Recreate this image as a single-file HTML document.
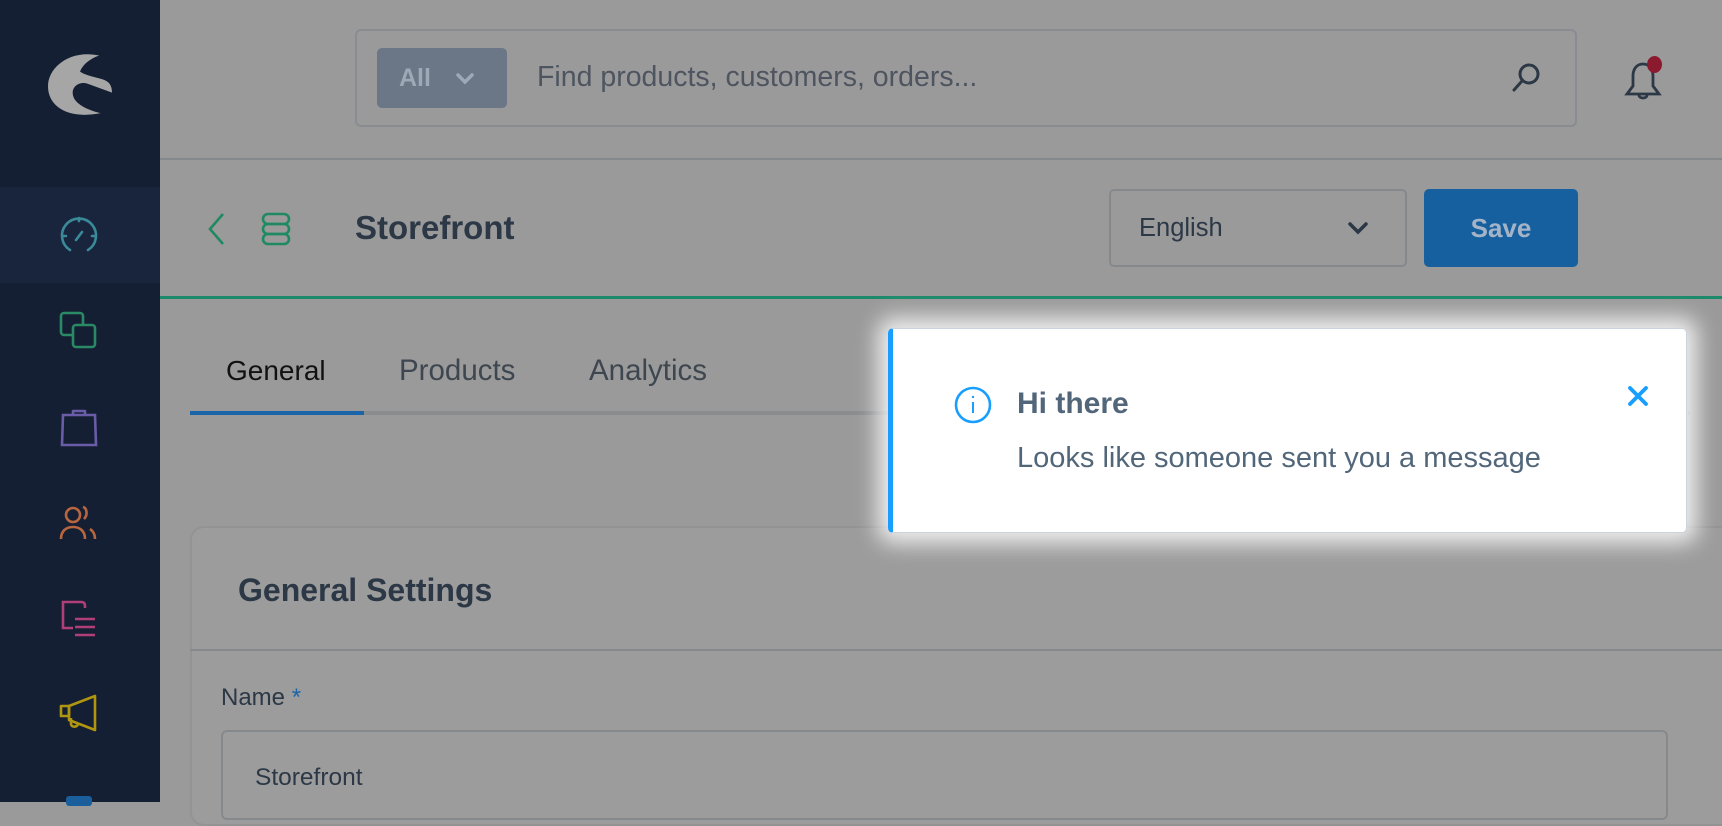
<!DOCTYPE html>
<html style="background:#9a9a9a"><head><meta charset="utf-8"><style>
*{box-sizing:border-box;margin:0;padding:0}
body{width:1722px;height:802px;overflow:hidden;background:#9a9a9a;font-family:"Liberation Sans",sans-serif;position:relative;color:#2c3846}
.a{position:absolute}
.side{left:0;top:0;width:160px;height:802px;background:#151f33}
.ico{position:absolute;left:57px;width:44px;height:44px}
</style></head><body>
<div class="a side">
  <svg class="a" style="left:46px;top:53px" width="68" height="64" viewBox="0 0 100 100"><path d="M80 4 C35 -6 0 22 0 52 C0 84 32 104 82 94 C62 89 42 80 39 66 C36 52 50 44 62 48 L100 62 C100 50 95 44 85 41 C70 37 56 34 50 29 C55 17 66 9 80 4Z" fill="#a6a6a6"/></svg>
  <div class="a" style="left:0;top:187px;width:160px;height:96px;background:#19253c"></div>
  <svg class="ico" style="top:212px" viewBox="0 0 44 44" fill="none" stroke="#3a8a9a" stroke-width="2.6" stroke-linecap="round"><path d="M13 38 A17 17 0 1 1 31 38"/><path d="M19 28 L25 20"/><path d="M22 6v3M6 24h3M35 24h3"/></svg>
  <svg class="ico" style="top:309px" viewBox="0 0 44 44" fill="none" stroke="#2a8a66" stroke-width="2.6"><rect x="4" y="4" width="22" height="22" rx="3"/><rect x="16" y="16" width="22" height="22" rx="3" fill="#151f33"/></svg>
  <svg class="ico" style="top:405px" viewBox="0 0 44 44" fill="none" stroke="#6a5ca8" stroke-width="2.6"><path d="M6 10h32l1 30H5z"/><path d="M16 10V6h12v4" stroke-linejoin="round"/></svg>
  <svg class="ico" style="top:501px" viewBox="0 0 44 44" fill="none" stroke="#b86640" stroke-width="2.6"><circle cx="16" cy="14" r="7"/><path d="M4 38c0-8 5-12 12-12s12 4 12 12M26 6c4 1 5 8 1 12M33 28c3 2 5 5 5 10"/></svg>
  <svg class="ico" style="top:596px" viewBox="0 0 44 44" fill="none" stroke="#b03e78" stroke-width="2.6"><path d="M24 6H6v26h10M18 23h20M18 31h20M18 39h20"/><path d="M24 6c4 0 4 2 4 6"/></svg>
  <svg class="ico" style="top:692px" viewBox="0 0 44 44" fill="none" stroke="#b09610" stroke-width="2.6" stroke-linejoin="round"><path d="M4 14h8v10H4z"/><path d="M12 14l26-10v34l-26-10z"/><path d="M14 26l0 6c0 3 6 4 7 0"/></svg>
  <div class="a" style="left:66px;top:796px;width:26px;height:10px;background:#1a5f9c;border-radius:3px"></div>
</div>
<!-- header -->
<div class="a" style="left:160px;top:158px;width:1562px;height:2px;background:#86898c"></div>
<div class="a" style="left:355px;top:29px;width:1222px;height:98px;border:2px solid #898c90;border-radius:6px"></div>
<div class="a" style="left:377px;top:48px;width:130px;height:60px;background:#6b7686;border-radius:5px;color:#9ea8b6;font-size:25px;font-weight:bold;line-height:60px;padding-left:22px">All<svg class="a" style="left:78px;top:24px" width="20" height="14" viewBox="0 0 20 14" fill="none" stroke="#9ea8b6" stroke-width="3.5" stroke-linecap="round"><path d="M3 3l7 7 7-7"/></svg></div>
<div class="a" style="left:537px;top:61px;font-size:28.5px;color:#4e5560">Find products, customers, orders...</div>
<svg class="a" style="left:1511px;top:61px" width="30" height="34" viewBox="0 0 30 34" fill="none" stroke="#2c3846" stroke-width="3" stroke-linecap="round"><circle cx="18" cy="13" r="9"/><path d="M11 20L3 29"/></svg>
<svg class="a" style="left:1623px;top:58px" width="40" height="46" viewBox="0 0 40 46" fill="none" stroke="#2c3846" stroke-width="2.8"><path d="M20 6c-7 0-10 6-10 12v10l-6 8h32l-6-8V18c0-6-3-12-10-12z"/><path d="M16 37c0 4 8 4 8 0"/></svg>
<div class="a" style="left:1647px;top:56px;width:15px;height:17px;border-radius:50%;background:#8c1a2e"></div>
<!-- page head -->
<svg class="a" style="left:206px;top:212px" width="22" height="34" viewBox="0 0 22 34" fill="none" stroke="#1f8a62" stroke-width="2.6"><path d="M17 2L4 17l13 15"/></svg>
<svg class="a" style="left:260px;top:212px" width="32" height="34" viewBox="0 0 32 34" fill="none" stroke="#1f8a62" stroke-width="2.6"><rect x="3" y="2" width="26" height="10" rx="5"/><rect x="3" y="12" width="26" height="10" rx="5"/><rect x="3" y="22" width="26" height="10" rx="5"/></svg>
<div class="a" style="left:355px;top:209px;font-size:33px;font-weight:bold;color:#2c3846">Storefront</div>
<div class="a" style="left:1109px;top:189px;width:298px;height:78px;border:2px solid #86898c;border-radius:5px;font-size:25.5px;line-height:74px;padding-left:28px;color:#2c3846">English<svg class="a" style="left:236px;top:30px" width="22" height="14" viewBox="0 0 22 14" fill="none" stroke="#2c3846" stroke-width="3.5" stroke-linecap="round"><path d="M3 3l8 8 8-8"/></svg></div>
<div class="a" style="left:1424px;top:189px;width:154px;height:78px;background:#1660a0;border-radius:5px;color:#a4b4c6;font-size:26px;font-weight:bold;text-align:center;line-height:78px">Save</div>
<div class="a" style="left:160px;top:296px;width:1562px;height:3px;background:#1c8a6a"></div>
<!-- tabs -->
<div class="a" style="left:190px;top:411px;width:1500px;height:4px;background:#8a8c8e"></div>
<div class="a" style="left:190px;top:411px;width:174px;height:4px;background:#1a64a8"></div>
<div class="a" style="left:226px;top:355px;font-size:28px;color:#111">General</div>
<div class="a" style="left:399px;top:354px;font-size:29.5px;color:#3e4650">Products</div>
<div class="a" style="left:589px;top:354px;font-size:29.5px;color:#3e4650">Analytics</div>
<!-- card -->
<div class="a" style="left:190px;top:526px;width:1560px;height:300px;background:#9c9c9c;border:2px solid #939393;border-radius:14px"></div>
<div class="a" style="left:190px;top:649px;width:1532px;height:2px;background:#86898c"></div>
<div class="a" style="left:238px;top:572px;font-size:32px;font-weight:bold;color:#2c3846">General Settings</div>
<div class="a" style="left:221px;top:684px;font-size:24px;color:#2c3846">Name <span style="color:#1a64a8">*</span></div>
<div class="a" style="left:221px;top:730px;width:1447px;height:90px;border:2px solid #86898c;border-radius:6px"></div>
<div class="a" style="left:255px;top:764px;font-size:24.5px;color:#2c3846">Storefront</div>
<!-- toast -->
<div class="a" style="left:888px;top:328px;width:799px;height:205px;background:#fff;border:1px solid #cbd3dc;border-left:5px solid #189eff;border-radius:5px;box-shadow:0 0 22px 10px rgba(255,255,255,0.85)">
  <svg class="a" style="left:60px;top:56px" width="40" height="40" viewBox="0 0 40 40" fill="none" stroke="#189eff" stroke-width="2.6"><circle cx="20" cy="20" r="17"/><path d="M20 17v11" stroke-width="2"/><circle cx="20" cy="12" r="1.2" fill="#189eff" stroke="none"/></svg>
  <div class="a" style="left:124px;top:58px;font-size:30px;font-weight:bold;color:#52667a">Hi there</div>
  <div class="a" style="left:124px;top:113px;font-size:29px;color:#52667a">Looks like someone sent you a message</div>
  <svg class="a" style="left:734px;top:56px" width="22" height="22" viewBox="0 0 22 22" fill="none" stroke="#189eff" stroke-width="3.8" stroke-linecap="round"><path d="M3 3l16 16M19 3L3 19"/></svg>
</div>
</body></html>
